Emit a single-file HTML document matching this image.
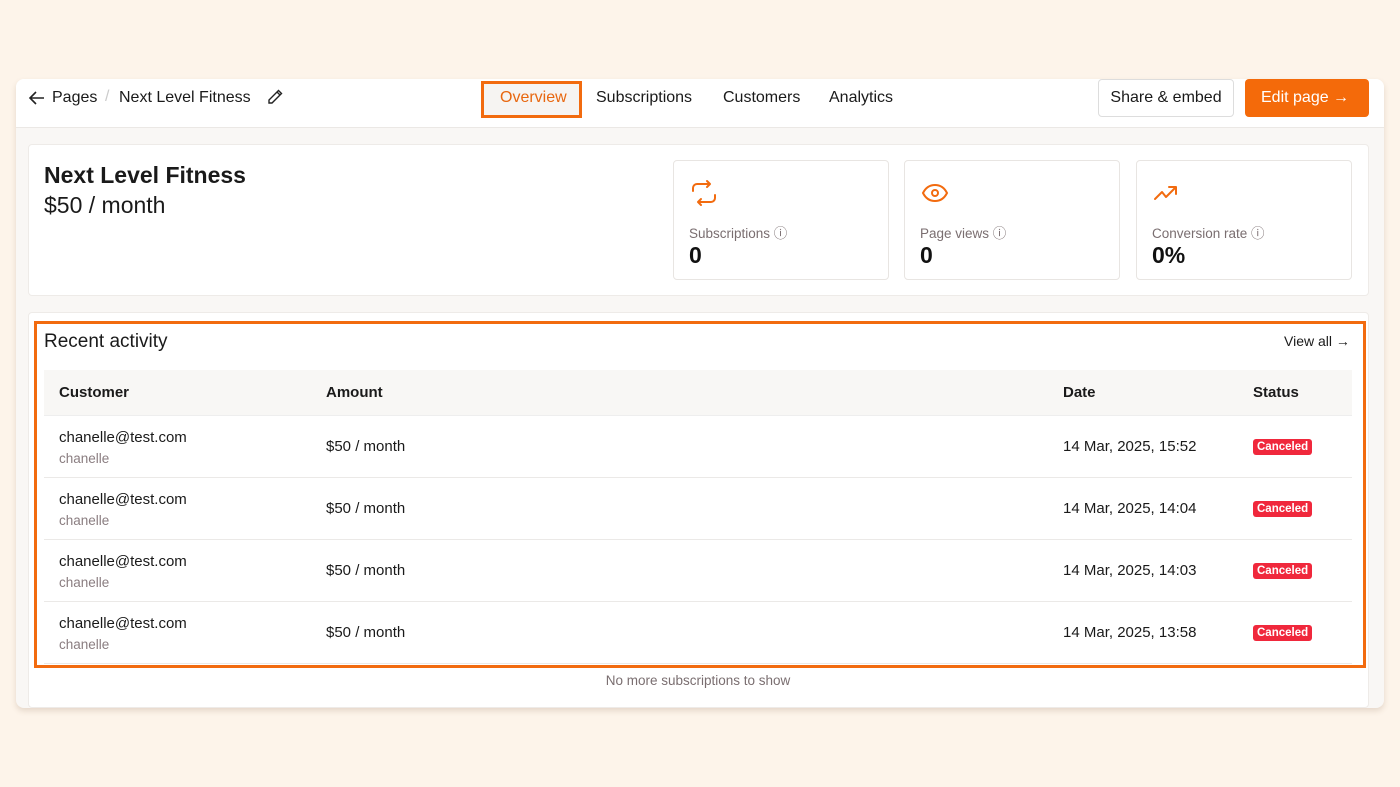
<!DOCTYPE html>
<html><head><meta charset="utf-8"><style>
*{box-sizing:border-box;margin:0;padding:0}
body{width:1400px;height:787px;background:#fdf4ea;font-family:"Liberation Sans",sans-serif;color:#1a1a1a;position:relative;overflow:hidden}
.card{position:absolute;left:16px;top:79px;width:1368px;height:629px;background:#f9f7f5;border-radius:8px;box-shadow:0 3px 6px rgba(120,90,60,.18);overflow:hidden}
.hdr{position:absolute;left:0;top:0;width:100%;height:49px;background:#fff;border-bottom:1px solid #ebe8e5}
.a{position:absolute;white-space:nowrap}
.panel{position:absolute;background:#fff;border:1px solid #eeebe8;border-radius:4px}
.stat{position:absolute;top:160px;width:216px;height:120px;background:#fff;border:1px solid #e8e5e2;border-radius:4px}
.stat .l{position:absolute;left:15px;top:61px;font-size:13.5px;color:#7a6e70}
.stat .v{position:absolute;left:15px;top:81px;font-size:23px;font-weight:bold;color:#111}
.stat svg.ic{position:absolute;left:15px;top:18px}
.th{font-weight:bold;font-size:15px}
.badge{background:#f0283c;color:#fff;font-size:11.5px;font-weight:bold;padding:2px 4px;border-radius:3px}
</style></head><body>
<div class="card">
 <div class="hdr">
  <svg class="a" style="left:12px;top:10px" width="18" height="18" viewBox="0 0 18 18" fill="none" stroke="#222" stroke-width="1.6"><path d="M16 9H2M8 3L2 9l6 6"/></svg>
  <div class="a" style="left:36px;top:10px;font-size:16px">Pages</div>
  <div class="a" style="left:89px;top:9px;font-size:16px;color:#ccc">/</div>
  <div class="a" style="left:103px;top:10px;font-size:16px">Next Level Fitness</div>
  <svg class="a" style="left:250px;top:9px" width="18" height="18" viewBox="0 0 18 18" fill="none" stroke="#222" stroke-width="1.4"><path d="M12.5 2.5l3 3L6 15H3v-3z M11 4l3 3"/></svg>
  <div class="a" style="left:465px;top:2px;width:101px;height:37px;border:3px solid #f26b0f;background:#f6f4f2"></div>
  <div class="a" style="left:484px;top:10px;font-size:16px;color:#e8670f">Overview</div>
  <div class="a" style="left:580px;top:10px;font-size:16px">Subscriptions</div>
  <div class="a" style="left:707px;top:10px;font-size:16px">Customers</div>
  <div class="a" style="left:813px;top:10px;font-size:16px">Analytics</div>
  <div class="a" style="left:1082px;top:0;width:136px;height:38px;border:1px solid #ddd;border-radius:4px;background:#fff;font-size:16px;text-align:center;line-height:36px">Share &amp; embed</div>
  <div class="a" style="left:1229px;top:0;width:124px;height:38px;background:#f46a0a;border-radius:4px;color:#fff;font-size:16px;line-height:38px;padding-left:16px">Edit page →</div>
 </div>
 <div class="panel" style="left:12px;top:65px;width:1341px;height:152px"></div>
 <div class="a" style="left:28px;top:83px;font-size:23px;font-weight:bold">Next Level Fitness</div>
 <div class="a" style="left:28px;top:113px;font-size:23px">$50 / month</div>
</div>
<div class="stat" style="left:673px"><svg class="ic" width="30" height="28" viewBox="0 0 30 28" fill="none" stroke="#f26b0f" stroke-width="2" stroke-linecap="round" stroke-linejoin="round"><path d="M4 12V9a4 4 0 0 1 4-4h13M18 2l3 3-3 3M26 16v3a4 4 0 0 1-4 4H9M12 26l-3-3 3-3"/></svg><div class="l">Subscriptions ⓘ</div><div class="v">0</div></div>
<div class="stat" style="left:904px"><svg class="ic" width="30" height="28" viewBox="0 0 30 28" fill="none" stroke="#f26b0f" stroke-width="2"><path d="M3 14c3-6 7-8 12-8s9 2 12 8c-3 6-7 8-12 8s-9-2-12-8z"/><circle cx="15" cy="14" r="3"/></svg><div class="l">Page views ⓘ</div><div class="v">0</div></div>
<div class="stat" style="left:1136px"><svg class="ic" width="30" height="28" viewBox="0 0 30 28" fill="none" stroke="#f26b0f" stroke-width="2" stroke-linejoin="round" stroke-linecap="round"><path d="M3 20l7-7 4 5 9-9M17 8h7v7"/></svg><div class="l">Conversion rate ⓘ</div><div class="v">0%</div></div>
<div class="a" style="left:28px;top:312px;width:1341px;height:396px;background:#fff;border:1px solid #eeebe8;border-radius:4px"></div>
<div class="a" style="left:34px;top:321px;width:1332px;height:347px;border:3px solid #f26b0f"></div>
<div class="a" style="left:44px;top:331px;font-size:19px">Recent activity</div>
<div class="a" style="left:1284px;top:333px;font-size:14px">View all →</div>
<div class="a" style="left:44px;top:370px;width:1308px;height:46px;background:#f8f7f5;border-bottom:1px solid #eee"></div>
<div class="a th" style="left:59px;top:384px">Customer</div>
<div class="a th" style="left:326px;top:384px">Amount</div>
<div class="a th" style="left:1063px;top:384px">Date</div>
<div class="a th" style="left:1253px;top:384px">Status</div>
<div style="position:absolute;left:44px;top:416px;width:1308px">
<div style="position:relative;height:62px;border-bottom:1px solid #ebe9e7"><div class="a" style="left:15px;top:13px;font-size:15px">chanelle@test.com</div><div class="a" style="left:15px;top:35px;font-size:13.5px;color:#8a7d80">chanelle</div><div class="a" style="left:282px;top:22px;font-size:15px">$50 / month</div><div class="a" style="left:1019px;top:22px;font-size:15px">14 Mar, 2025, 15:52</div><div class="a" style="left:1209px;top:21px"><span class="badge">Canceled</span></div></div>
<div style="position:relative;height:62px;border-bottom:1px solid #ebe9e7"><div class="a" style="left:15px;top:13px;font-size:15px">chanelle@test.com</div><div class="a" style="left:15px;top:35px;font-size:13.5px;color:#8a7d80">chanelle</div><div class="a" style="left:282px;top:22px;font-size:15px">$50 / month</div><div class="a" style="left:1019px;top:22px;font-size:15px">14 Mar, 2025, 14:04</div><div class="a" style="left:1209px;top:21px"><span class="badge">Canceled</span></div></div>
<div style="position:relative;height:62px;border-bottom:1px solid #ebe9e7"><div class="a" style="left:15px;top:13px;font-size:15px">chanelle@test.com</div><div class="a" style="left:15px;top:35px;font-size:13.5px;color:#8a7d80">chanelle</div><div class="a" style="left:282px;top:22px;font-size:15px">$50 / month</div><div class="a" style="left:1019px;top:22px;font-size:15px">14 Mar, 2025, 14:03</div><div class="a" style="left:1209px;top:21px"><span class="badge">Canceled</span></div></div>
<div style="position:relative;height:62px;border-bottom:1px solid #ebe9e7"><div class="a" style="left:15px;top:13px;font-size:15px">chanelle@test.com</div><div class="a" style="left:15px;top:35px;font-size:13.5px;color:#8a7d80">chanelle</div><div class="a" style="left:282px;top:22px;font-size:15px">$50 / month</div><div class="a" style="left:1019px;top:22px;font-size:15px">14 Mar, 2025, 13:58</div><div class="a" style="left:1209px;top:21px"><span class="badge">Canceled</span></div></div>
</div>
<div class="a" style="left:0;width:1396px;text-align:center;top:673px;font-size:13.5px;color:#7a6e70">No more subscriptions to show</div>
</body></html>
